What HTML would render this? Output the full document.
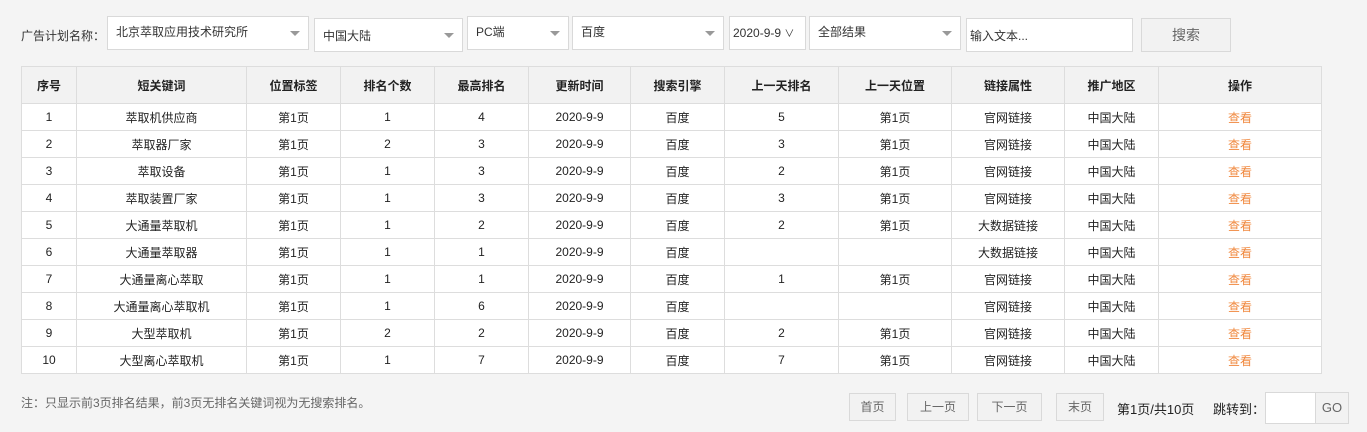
<!DOCTYPE html>
<html><head><meta charset="utf-8"><style>
*{box-sizing:border-box;margin:0;padding:0}
body{width:1367px;height:432px;background:#f4f4f4;font-family:"Liberation Sans","Noto Sans CJK SC",sans-serif;font-size:12px;color:#333;position:relative;overflow:hidden}
.a{position:absolute}
.sel{position:absolute;background:#fff;border:1px solid #d9d9d9;padding-left:8px;line-height:31px;color:#333}
.sel:after{content:"";position:absolute;right:8px;top:14px;border-left:5px solid transparent;border-right:5px solid transparent;border-top:5px solid #999}
table{position:absolute;left:21px;top:66px;border-collapse:collapse;background:#fff;width:1301px}
td,th{border:1px solid #ddd;text-align:center;height:27px;font-size:12px;color:#222;font-weight:normal}
th{height:37px;background:#f2f2f2;font-weight:bold}
.l{color:#f0883e}
.btn{position:absolute;border:1px solid #d9d9d9;background:#f2f2f2;color:#666;text-align:center;top:393px;height:28px;line-height:26px}
</style></head><body>
<div class="a" style="left:21px;top:27px">广告计划名称：</div>
<div class="sel" style="left:107px;top:16px;width:202px;height:34px;line-height:31px">北京萃取应用技术研究所</div>
<div class="sel" style="left:314px;top:18px;width:149px;height:34px;line-height:34px">中国大陆</div>
<div class="sel" style="left:467px;top:16px;width:102px;height:34px">PC端</div>
<div class="sel" style="left:572px;top:16px;width:152px;height:34px">百度</div>
<div class="a" style="left:729px;top:16px;width:77px;height:34px;background:#fff;border:1px solid #d9d9d9;line-height:32px;padding-left:3px">2020-9-9 <span style="font-size:10px">&#8744;</span></div>
<div class="sel" style="left:809px;top:16px;width:152px;height:34px">全部结果</div>
<div class="a" style="left:966px;top:18px;width:167px;height:34px;background:#fff;border:1px solid #d9d9d9;line-height:34px;padding-left:3px">输入文本...</div>
<div class="btn" style="left:1141px;top:18px;width:90px;height:34px;line-height:32px;font-size:14px">搜索</div>
<table>
<colgroup><col style="width:55px"><col style="width:170px"><col style="width:94px"><col style="width:94px"><col style="width:94px"><col style="width:102px"><col style="width:94px"><col style="width:114px"><col style="width:113px"><col style="width:113px"><col style="width:94px"><col></colgroup>
<tr><th>序号</th><th>短关键词</th><th>位置标签</th><th>排名个数</th><th>最高排名</th><th>更新时间</th><th>搜索引擎</th><th>上一天排名</th><th>上一天位置</th><th>链接属性</th><th>推广地区</th><th>操作</th></tr>
<tr><td>1</td><td>萃取机供应商</td><td>第1页</td><td>1</td><td>4</td><td>2020-9-9</td><td>百度</td><td>5</td><td>第1页</td><td>官网链接</td><td>中国大陆</td><td class="l">查看</td></tr>
<tr><td>2</td><td>萃取器厂家</td><td>第1页</td><td>2</td><td>3</td><td>2020-9-9</td><td>百度</td><td>3</td><td>第1页</td><td>官网链接</td><td>中国大陆</td><td class="l">查看</td></tr>
<tr><td>3</td><td>萃取设备</td><td>第1页</td><td>1</td><td>3</td><td>2020-9-9</td><td>百度</td><td>2</td><td>第1页</td><td>官网链接</td><td>中国大陆</td><td class="l">查看</td></tr>
<tr><td>4</td><td>萃取装置厂家</td><td>第1页</td><td>1</td><td>3</td><td>2020-9-9</td><td>百度</td><td>3</td><td>第1页</td><td>官网链接</td><td>中国大陆</td><td class="l">查看</td></tr>
<tr><td>5</td><td>大通量萃取机</td><td>第1页</td><td>1</td><td>2</td><td>2020-9-9</td><td>百度</td><td>2</td><td>第1页</td><td>大数据链接</td><td>中国大陆</td><td class="l">查看</td></tr>
<tr><td>6</td><td>大通量萃取器</td><td>第1页</td><td>1</td><td>1</td><td>2020-9-9</td><td>百度</td><td></td><td></td><td>大数据链接</td><td>中国大陆</td><td class="l">查看</td></tr>
<tr><td>7</td><td>大通量离心萃取</td><td>第1页</td><td>1</td><td>1</td><td>2020-9-9</td><td>百度</td><td>1</td><td>第1页</td><td>官网链接</td><td>中国大陆</td><td class="l">查看</td></tr>
<tr><td>8</td><td>大通量离心萃取机</td><td>第1页</td><td>1</td><td>6</td><td>2020-9-9</td><td>百度</td><td></td><td></td><td>官网链接</td><td>中国大陆</td><td class="l">查看</td></tr>
<tr><td>9</td><td>大型萃取机</td><td>第1页</td><td>2</td><td>2</td><td>2020-9-9</td><td>百度</td><td>2</td><td>第1页</td><td>官网链接</td><td>中国大陆</td><td class="l">查看</td></tr>
<tr><td>10</td><td>大型离心萃取机</td><td>第1页</td><td>1</td><td>7</td><td>2020-9-9</td><td>百度</td><td>7</td><td>第1页</td><td>官网链接</td><td>中国大陆</td><td class="l">查看</td></tr>
</table>
<div class="a" style="left:21px;top:394px;color:#666">注：只显示前3页排名结果，前3页无排名关键词视为无搜索排名。</div>
<div class="btn" style="left:849px;width:47px">首页</div>
<div class="btn" style="left:907px;width:62px">上一页</div>
<div class="btn" style="left:977px;width:65px">下一页</div>
<div class="btn" style="left:1056px;width:48px">末页</div>
<div class="a" style="left:1117px;top:399px;font-size:13px;color:#222">第1页/共10页</div>
<div class="a" style="left:1213px;top:399px;font-size:13px;color:#222">跳转到：</div>
<div class="a" style="left:1265px;top:392px;width:51px;height:32px;background:#fff;border:1px solid #d9d9d9"></div>
<div class="btn" style="left:1315px;top:392px;width:34px;height:32px;line-height:30px;font-size:13px">GO</div>
</body></html>
